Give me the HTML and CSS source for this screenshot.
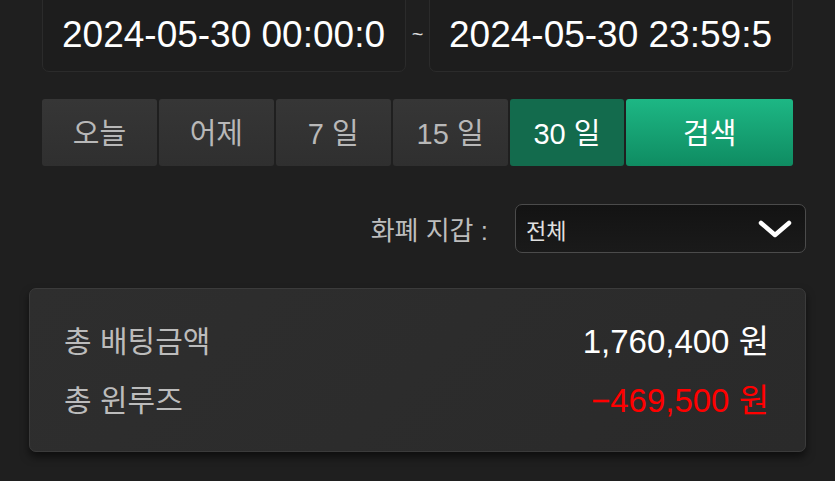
FILE: index.html
```html
<!DOCTYPE html>
<html lang="ko">
<head>
<meta charset="utf-8">
<link rel="stylesheet" href="styles.css">
</head>
<body>
<div class="page">
  <div class="date-row">
    <div class="date-box"><span class="date-text">2024-05-30 00:00:0</span></div>
    <div class="tilde">~</div>
    <div class="date-box"><span class="date-text">2024-05-30 23:59:5</span></div>
  </div>
  <div class="btn-row">
    <div class="btn">오늘</div>
    <div class="btn">어제</div>
    <div class="btn">7 일</div>
    <div class="btn">15 일</div>
    <div class="btn btn-active">30 일</div>
    <div class="btn btn-search">검색</div>
  </div>
  <div class="filter-row">
    <div class="filter-label">화폐 지갑 :</div>
    <div class="select">
      <span class="select-text">전체</span>
      <svg class="chevron" width="34" height="20" viewBox="0 0 34 20"><path d="M3 4 L17 16 L31 4" fill="none" stroke="#fff" stroke-width="4.5" stroke-linecap="round" stroke-linejoin="round"/></svg>
    </div>
  </div>
  <div class="card">
    <div class="card-row">
      <span class="card-label">총 배팅금액</span>
      <span class="card-value">1,760,400 원</span>
    </div>
    <div class="card-row">
      <span class="card-label">총 윈루즈</span>
      <span class="card-value neg">−469,500 원</span>
    </div>
  </div>
</div>
</body>
</html>
```

FILE: styles.css
```css
html, body {
  margin: 0;
  padding: 0;
  background: #1f1f1f;
}
body {
  width: 835px;
  height: 481px;
  overflow: hidden;
  font-family: "Liberation Sans", "Noto Sans CJK KR", sans-serif;
}
.page {
  padding: 0 29px;
  display: flex;
  flex-direction: column;
}
.date-row {
  margin: -10px 13px 0;
  display: grid;
  grid-template-columns: 1fr 23px 1fr;
  height: 82px;
}
.date-box {
  border: 1px solid #2b2b2b;
  border-radius: 7px;
  background: #1d1d1d;
  display: flex;
  align-items: center;
  padding: 8px 0 0 19px;
  overflow: hidden;
}
.date-text {
  color: #fff;
  font-size: 37px;
  white-space: nowrap;
}
.tilde {
  color: #ddd;
  font-size: 20px;
  text-align: center;
  padding-top: 33px;
}
.btn-row {
  margin: 27px 13px 0;
  display: grid;
  grid-template-columns: repeat(5, 1fr) 1.45fr;
  gap: 2px;
  height: 67px;
}
.btn {
  background: linear-gradient(#363636, #2f2f2f);
  border-radius: 3px;
  color: #b8b8b8;
  font-size: 29px;
  display: flex;
  align-items: center;
  justify-content: center;
  padding-bottom: 3px;
  box-sizing: border-box;
}
.btn-active {
  background: #136b4d;
  color: #fff;
}
.btn-search {
  background: linear-gradient(#1db784, #0f8c62);
  color: #fff;
}
.filter-row {
  margin-top: 38px;
  display: flex;
  justify-content: flex-end;
  align-items: center;
  gap: 27px;
}
.filter-label {
  color: #bdbdbd;
  font-size: 26px;
}
.select {
  width: 291px;
  height: 49px;
  box-sizing: border-box;
  border: 1.5px solid #4b4b4b;
  border-radius: 7px;
  background: linear-gradient(#131313, #1a1a1a);
  display: flex;
  align-items: center;
  justify-content: space-between;
  padding: 0 13px 0 10px;
}
.select-text {
  color: #e0e0e0;
  font-size: 22px;
}
.card {
  margin-top: 35px;
  height: 164px;
  box-sizing: border-box;
  background: linear-gradient(135deg, #2e2e2e, #2a2a2a);
  border: 1px solid #3b3b3b;
  border-radius: 7px;
  box-shadow: 0 5px 8px rgba(0, 0, 0, 0.55);
  padding: 20px 36px 24px 34px;
  display: flex;
  flex-direction: column;
}
.card-row {
  height: 60px;
  display: flex;
  align-items: center;
  justify-content: space-between;
}
.card-label {
  color: #bcbcbc;
  font-size: 30px;
}
.card-value {
  color: #fff;
  font-size: 33px;
}
.neg {
  color: #ff0000;
}
```
